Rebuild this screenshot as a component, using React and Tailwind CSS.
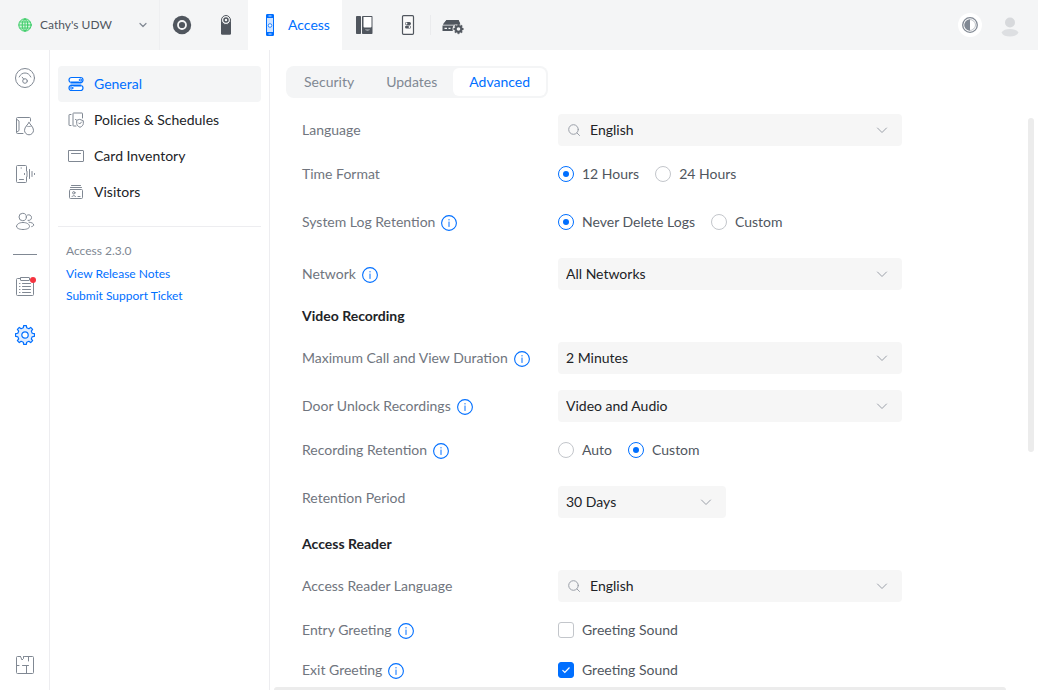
import { useState } from "react"
import clsx from "clsx"

/* ---------- icons ---------- */

function Icon({ size = 20, children, className }) {
  return (
    <svg
      width={size} height={size} viewBox={`0 0 ${size} ${size}`}
      fill="none" stroke="currentColor" strokeLinecap="round" strokeLinejoin="round"
      className={clsx("shrink-0", className)} aria-hidden="true"
    >
      {children}
    </svg>
  )
}

const GlobeIcon = () => (
  <Icon size={14} className="text-[#38cc65]">
    <circle cx="7" cy="7" r="6.200" fill="#d5f5df" />
    <ellipse cx="7" cy="7" rx="2.8" ry="6" />
    <path d="M7 1v12M1 7h12M2 4h10M2 10h10" strokeWidth="0.9" />
  </Icon>
)

const Chevron = ({ className }) => (
  <Icon size={12} className={className}>
    <path d="M1.5 4 6 8.5 10.5 4" />
  </Icon>
)

const SmallChevron = () => (
  <Icon size={8} className="text-[#808893]">
    <path d="M1 2.500 4 5.500 7 2.500" strokeWidth="1.200" />
  </Icon>
)

const NetworkIcon = () => (
  <Icon className="text-[#50565e]">
    <circle cx="10" cy="10" r="9.2" fill="currentColor" stroke="none" />
    <circle cx="10" cy="10" r="4" stroke="#f4f5f6" strokeWidth="1.8" />
  </Icon>
)

const ProtectIcon = () => (
  <Icon className="text-[#50565e]">
    <path d="M5 6h10v12.500a1.300 1.300 0 0 1-1.300 1.300H6.300A1.300 1.300 0 0 1 5 18.500z" fill="currentColor" stroke="none" />
    <circle cx="10" cy="5" r="4.500" fill="#f4f5f6" />
    <circle cx="10" cy="5" r="2" strokeWidth="1.500" />
  </Icon>
)

const AccessIcon = () => (
  <svg width="8" height="22" viewBox="0 0 8 22" fill="none" aria-hidden="true">
    <rect x="0.500" y="0.500" width="7" height="21" rx="0.500" fill="#cfe3ff" stroke="#006fff" />
    <rect x="0.500" y="0.500" width="7" height="3.500" fill="#006fff" />
    <rect x="0.500" y="18" width="7" height="3.500" fill="#006fff" />
    <path d="M2.500 2h3M2.500 20h3" stroke="#fff" strokeWidth="0.800" />
    <circle cx="4" cy="11.500" r="1.800" fill="#fff" stroke="#006fff" strokeWidth="0.800" />
  </svg>
)

const TalkIcon = () => (
  <Icon className="text-[#50565e]">
    <rect x="2" y="1" width="5" height="18" rx="0.800" fill="currentColor" stroke="none" />
    <rect x="8" y="1" width="10.500" height="18" rx="0.800" fill="currentColor" stroke="none" />
    <path d="M9.500 2h8v9.500a1 1 0 0 1-1 1h-6a1 1 0 0 1-1-1z" fill="#fff" stroke="none" />
    <path d="M11 14.500h5c-.5 1.500-4.500 1.500-5 0z" fill="#b9bdc3" stroke="none" />
  </Icon>
)

const ConnectIcon = () => (
  <Icon className="text-[#50565e]">
    <rect x="4.500" y="0.700" width="11" height="18.600" rx="1" fill="#fafafa" strokeWidth="1.200" />
    <rect x="7" y="7" width="6" height="3" rx="1.500" fill="currentColor" stroke="none" />
    <rect x="7" y="10.500" width="6" height="3" rx="1.500" fill="currentColor" stroke="none" />
    <circle cx="8.500" cy="8.500" r="0.900" fill="#fff" stroke="none" />
    <circle cx="11.500" cy="12" r="0.900" fill="#fff" stroke="none" />
  </Icon>
)

// closed outline of a cog, teeth spread evenly round the centre
function cogPath(cx, cy, outer, inner, teeth) {
  const step = (Math.PI * 2) / teeth
  const at = (r, a) => `${(cx + r * Math.sin(a)).toFixed(2)} ${(cy - r * Math.cos(a)).toFixed(2)}`
  let d = ""
  for (let i = 0; i < teeth; i++) {
    const a = i * step
    d += `${i ? "L" : "M"}${at(outer, a - step * 0.18)}L${at(outer, a + step * 0.18)}L${at(inner, a + step * 0.3)}L${at(inner, a + step * 0.7)}`
  }
  return d + "Z"
}

const ConsoleIcon = () => (
  <svg width="22" height="22" viewBox="0 -6 22 22" className="text-[#50565e]" aria-hidden="true">
    <path d="M4.500 0h12L18.500 4.500H1z" fill="currentColor" />
    <path d="M0.500 5.500h16v5.500h-16z" fill="currentColor" />
    <path d="M2.500 8.300h2.500M6.500 8.300h2" stroke="#f4f5f6" strokeWidth="1.200" />
    <circle cx="16.500" cy="9" r="6" fill="#f4f5f6" />
    <path d="M4.500 0h12L18.500 4.500H1z" fill="currentColor" />
    <path d={cogPath(16.5, 9, 4.9, 3.8, 8)} fill="currentColor" stroke="currentColor" strokeWidth="0.400" />
    <circle cx="16.500" cy="9" r="1.800" fill="#f4f5f6" />
  </svg>
)

const ContrastIcon = () => (
  <Icon size={16} className="text-[#808893]">
    <circle cx="8" cy="8" r="7.300" strokeWidth="1.300" />
    <path d="M8 2.200a5.800 5.800 0 0 0 0 11.600z" fill="currentColor" stroke="none" />
    <path d="M8 2.500a5.500 5.500 0 0 1 0 11" strokeWidth="0.500" />
  </Icon>
)

const AvatarIcon = () => (
  <Icon>
    <circle cx="10" cy="5.500" r="5" fill="#d7d9dc" stroke="none" />
    <path d="M1.500 15.500C3 13 6 12 10 12s7 1 8.500 3.500C17 18.500 14 19.500 10 19.500s-7-1-8.500-4z" fill="#dddfe2" stroke="none" />
  </Icon>
)

const DashboardIcon = () => (
  <Icon>
    <circle cx="10" cy="10" r="9.500" />
    <path d="M4.200 9c1.200-2.600 3.300-4 5.800-4s4.600 1.400 5.800 4" />
    <circle cx="10" cy="13" r="2.300" />
    <path d="m7.200 9.200 1.500 1.900" />
  </Icon>
)

const DoorsIcon = () => (
  <Icon>
    <path d="M15.500 5V2.500a1 1 0 0 0-1-1h-12a1 1 0 0 0-1 1v14a1 1 0 0 0 1 1H8" />
    <path d="M2 3.500 4 5v9.500L2 16" />
    <path d="M14 6.500c1 2 4.500 4.500 4.500 7.800a4.500 4.500 0 0 1-9 0c0-3.300 3.500-5.800 4.500-7.800z" />
    <path d="M11.500 10c1 .8 3.500.8 5 0" strokeWidth="0.800" />
  </Icon>
)

const DevicesIcon = () => (
  <Icon>
    <path d="M11.500 7V2.500a1 1 0 0 0-1-1h-8a1 1 0 0 0-1 1v15a1 1 0 0 0 1 1h8a1 1 0 0 0 1-1V13" />
    <path d="M6 4h.5M4.500 15.500h4" />
    <path d="M9.500 9.500v1M12 7.500v5M14.500 5.500v9M17 7.500v5M19.500 9.500v1" />
  </Icon>
)

const UsersIcon = () => (
  <Icon>
    <circle cx="7.700" cy="5" r="3.700" />
    <path d="M1.500 14.500c0-2.500 3-4 6.500-4s6.500 1.500 6.500 4c0 1.800-3 3-6.500 3s-6.500-1.200-6.500-3z" />
    <path d="M12.500 3c2-.8 4 .4 4 2.600 0 2-1.700 3.200-3.500 2.800M14 10.200c2.700.2 4.700 1.300 4.700 2.800 0 .8-.8 1.300-2 1.600" />
  </Icon>
)

const LogsIcon = () => (
  <Icon>
    <path d="M5.500 1.500h-3a1 1 0 0 0-1 1v15a1 1 0 0 0 1 1h15a1 1 0 0 0 1-1V5" />
    <rect x="5.500" y="0.500" width="9" height="3" rx="0.500" />
    <path d="M4.500 6.500h.5M4.500 9.500h.5M4.500 12.500h.5M4.500 15.500h.5M7.500 6.500h8M7.500 9.500h8M7.500 12.500h8M7.500 15.500h8" />
  </Icon>
)

const CogIcon = () => (
  <Icon>
    <path d={cogPath(10, 10, 9.5, 7.4, 8)} fill="#e0edff" strokeWidth="1.200" />
    <circle cx="10" cy="10" r="3.200" fill="#fff" strokeWidth="1.200" />
  </Icon>
)

const FloorplanIcon = () => (
  <Icon>
    <path d="M5.500 1.500h-3a1 1 0 0 0-1 1v15a1 1 0 0 0 1 1h15a1 1 0 0 0 1-1v-15a1 1 0 0 0-1-1h-8M5.500 1.500l1.500 3.500 1.500-1.500v-2M13.500 1.500V6M1.500 10.500H4M7.500 10.500h6M11.500 10.500v8" />
  </Icon>
)

const GeneralIcon = () => (
  <Icon size={16}>
    <rect x="1" y="1.500" width="14" height="5" rx="2.500" fill="#fff" strokeWidth="1.200" />
    <rect x="1" y="9.500" width="14" height="5" rx="2.500" fill="#fff" strokeWidth="1.200" />
    <path d="M2.500 5h8l3 2-.5 4H6L2.500 9z" fill="#7fb6ff" stroke="none" />
    <path d="M3.500 6.500h9a2.500 2.500 0 0 0 2-1M12.500 9.500h-9a2.500 2.500 0 0 0-2 1" strokeWidth="1.200" />
    <circle cx="12.300" cy="4" r="1.100" />
    <circle cx="3.800" cy="12" r="1.100" />
  </Icon>
)

const PoliciesIcon = () => (
  <Icon size={16}>
    <path d="M3 2.500H1.500a.5.500 0 0 0-.5.500v10a.5.500 0 0 0 .5.500H3M14.500 6V1.500a.5.500 0 0 0-.5-.5H5.500a.5.500 0 0 0-.5.500v12a.5.500 0 0 0 .5.500H8" />
    <path d="m12 7.500 3.300 1.200v2.800c0 1.800-1.500 3-3.300 3.800-1.800-.8-3.300-2-3.300-3.800V8.700zM10.700 11l1 1 1.800-2M7.500 7.500H8" />
  </Icon>
)

const CardIcon = () => (
  <Icon size={16}>
    <rect x="0.500" y="2.500" width="15" height="11" rx="0.500" />
    <path d="M3.500 5.500h9" />
  </Icon>
)

const VisitorsIcon = () => (
  <Icon size={16}>
    <path d="M3.500 1.500h9M2.500 3.500h11" />
    <rect x="1.500" y="5.500" width="13" height="9" rx="1" />
    <circle cx="5.800" cy="8.800" r="1.200" />
    <path d="M4 12.500c.5-1.200 3-1.200 3.600 0M10 12.500h2" />
  </Icon>
)

const SearchIcon = ({ className }) => (
  <Icon size={12} className={className}>
    <circle cx="5.500" cy="5.500" r="4.800" />
    <path d="m9 9 2.500 2.500" />
  </Icon>
)

const InfoIcon = () => (
  <Icon size={16} className="text-[#006fff]">
    <circle cx="8" cy="8" r="7.400" strokeWidth="1.100" />
    <path d="M8 7v4.500M8 4.500V5" />
  </Icon>
)

/* ---------- controls ---------- */

function Select({ id, value, search, className }) {
  return (
    <div className={clsx("relative h-8 text-[#212327]", className)}>
      {search && <SearchIcon className="pointer-events-none absolute left-2.5 top-2.5 text-[#9a9fa8]" />}
      <select id={id} defaultValue={value}
        className={clsx("h-8 w-full appearance-none rounded bg-[#f6f6f6] pr-8 text-sm outline-none", search ? "pl-8" : "pl-2")}>
        <option>{value}</option>
      </select>
      <Chevron className="pointer-events-none absolute right-[14px] top-2.5 text-[#9a9fa8]" />
    </div>
  )
}

function RadioGroup({ name, options, initial }) {
  const [value, setValue] = useState(initial)
  return (
    <div className="mb-2 flex h-6 items-center gap-4">
      {options.map(o => (
        <label key={o} className="flex items-center gap-2 text-[#50565e]">
          <input type="radio" name={name} checked={value === o} onChange={() => setValue(o)}
            className="grid size-4 appearance-none place-content-center rounded-full border border-[#c3c6cb] bg-white before:size-[6px] before:rounded-full checked:border-[#006fff] checked:before:bg-[#006fff]" />
          {o}
        </label>
      ))}
    </div>
  )
}

function Checkbox({ label, initial }) {
  const [checked, setChecked] = useState(initial)
  return (
    <label className="flex h-6 items-center gap-2 text-[#50565e]">
      <span className="relative size-4">
        <input type="checkbox" checked={checked} onChange={e => setChecked(e.target.checked)}
          className="block size-4 appearance-none rounded-[3px] border border-[#c3c6cb] bg-white checked:border-[#006fff] checked:bg-[#006fff]" />
        {checked && (
          <svg viewBox="0 0 16 16" fill="none" stroke="#fff" className="pointer-events-none absolute inset-0" aria-hidden="true">
            <path d="m4.500 8.200 2.300 2.300 4.700-5" strokeWidth="1.200" />
          </svg>
        )}
      </span>
      {label}
    </label>
  )
}

function Row({ label, info, htmlFor, top, children }) {
  const Label = htmlFor ? "label" : "span"
  return (
    <div className={clsx("grid grid-cols-[256px_1fr]", top ? "items-start" : "items-center")}>
      <div className="flex h-6 items-center gap-1.5 text-[#70757e]">
        <Label htmlFor={htmlFor}>{label}</Label>
        {info && <span className="pt-0.5"><InfoIcon /></span>}
      </div>
      {children}
    </div>
  )
}

const SectionTitle = ({ children }) => (
  <h2 className="h-5 font-bold leading-5 text-[#212327]">{children}</h2>
)

/* ---------- page ---------- */

const railItems = [
  { label: "Dashboard", icon: DashboardIcon },
  { label: "Doors", icon: DoorsIcon },
  { label: "Devices", icon: DevicesIcon },
  { label: "Users", icon: UsersIcon },
]

const navItems = [
  { label: "General", icon: GeneralIcon },
  { label: "Policies & Schedules", icon: PoliciesIcon },
  { label: "Card Inventory", icon: CardIcon },
  { label: "Visitors", icon: VisitorsIcon },
]

function AppButton({ label, children }) {
  return (
    <button aria-label={label} className="flex h-full w-11 items-center justify-center">
      {children}
    </button>
  )
}

function Header() {
  return (
    <header className="flex h-[50px] shrink-0 items-center bg-[#f4f5f6]">
      <button className="flex h-full w-40 items-center gap-2 border-r border-[#eeeff1] pl-[18px] pr-3 text-xs text-[#50565e]">
        <GlobeIcon />
        <span className="flex-1 text-left">Cathy's UDW</span>
        <SmallChevron />
      </button>
      <AppButton label="Network"><NetworkIcon /></AppButton>
      <AppButton label="Protect"><ProtectIcon /></AppButton>
      <button className="flex h-full items-center gap-3.5 bg-white pl-[18px] pr-3 text-sm text-[#006fff]">
        <AccessIcon />
        Access
      </button>
      <AppButton label="Talk"><TalkIcon /></AppButton>
      <AppButton label="Connect"><ConnectIcon /></AppButton>
      <div className="h-5 w-px bg-[#eaebed]" />
      <AppButton label="Console settings"><ConsoleIcon /></AppButton>
      <div className="ml-auto flex items-center gap-[18px] pr-[18px]">
        <button aria-label="Theme" className="flex size-6 items-center justify-center rounded-full bg-white"><ContrastIcon /></button>
        <button aria-label="Account" className="pt-1"><AvatarIcon /></button>
      </div>
    </header>
  )
}

function Rail() {
  return (
    <aside className="flex w-[50px] shrink-0 flex-col items-center border-r border-[#ededf0] pb-px pt-1 text-[#808893]">
      {railItems.map(({ label, icon: Glyph }) => (
        <button key={label} aria-label={label} className="flex size-12 items-center justify-center"><Glyph /></button>
      ))}
      <div className="my-2 h-px w-6 bg-[#808893]" />
      <button aria-label="Logs" className="flex size-12 items-center justify-center">
        <span className="relative">
          <LogsIcon />
          <span className="absolute -right-px top-0 size-1.5 rounded-full bg-[#f5333f]" />
        </span>
      </button>
      <button aria-label="Settings" className="flex size-12 items-center justify-center text-[#006fff]"><CogIcon /></button>
      <button aria-label="Floorplan" className="mt-auto flex size-12 items-center justify-center"><FloorplanIcon /></button>
    </aside>
  )
}

function SettingsNav() {
  return (
    <nav className="w-[220px] shrink-0 border-r border-[#ededf0] px-2 pt-4">
      {navItems.map(({ label, icon: Glyph }, i) => (
        <a key={label} href="#"
          className={clsx("flex h-9 items-center gap-2.5 rounded px-2.5", i === 0 ? "bg-[#f4f5f6] text-[#006fff]" : "text-[#212327]")}>
          <span className={i === 0 ? "" : "text-[#808893]"}><Glyph /></span>
          {label}
        </a>
      ))}
      <div className="mt-4 border-t border-[#ededf0] px-2 pt-3.5 text-xs text-[#808893]">
        <p className="h-[22px] leading-5">Access 2.3.0</p>
        <a href="#" className="block h-[22px] leading-[22px] text-[#006fff]">View Release Notes</a>
        <a href="#" className="block h-[22px] leading-[22px] text-[#006fff]">Submit Support Ticket</a>
      </div>
    </nav>
  )
}

export default function App() {
  const [tab, setTab] = useState("Advanced")

  return (
    <div className="flex h-screen flex-col overflow-hidden bg-white font-['Lato',sans-serif] text-sm">
      <Header />
      <div className="flex min-h-0 flex-1">
        <Rail />
        <SettingsNav />
        <main className="relative min-w-0 flex-1 overflow-hidden px-4 pt-4">
          <div className="inline-flex h-8 rounded-lg bg-[#f4f5f6] p-0.5">
            {["Security", "Updates", "Advanced"].map(t => (
              <button key={t} onClick={() => setTab(t)}
                className={clsx("rounded-md px-4", t === tab ? "bg-white text-[#006fff]" : "text-[#808893]")}>
                {t}
              </button>
            ))}
          </div>

          <div className="mt-4 flex max-w-[632px] flex-col gap-4 px-4">
            <Row label="Language" htmlFor="language"><Select id="language" value="English" search /></Row>
            <Row label="Time Format" top><RadioGroup name="time" options={["12 Hours", "24 Hours"]} initial="12 Hours" /></Row>
            <Row label="System Log Retention" info top>
              <RadioGroup name="logs" options={["Never Delete Logs", "Custom"]} initial="Never Delete Logs" />
            </Row>
            <Row label="Network" info htmlFor="network"><Select id="network" value="All Networks" /></Row>

            <SectionTitle>Video Recording</SectionTitle>
            <Row label="Maximum Call and View Duration" info htmlFor="duration"><Select id="duration" value="2 Minutes" /></Row>
            <Row label="Door Unlock Recordings" info htmlFor="unlock"><Select id="unlock" value="Video and Audio" /></Row>
            <Row label="Recording Retention" info top><RadioGroup name="retention" options={["Auto", "Custom"]} initial="Custom" /></Row>
            <Row label="Retention Period" htmlFor="period" top><Select id="period" value="30 Days" className="w-[168px]" /></Row>

            <SectionTitle>Access Reader</SectionTitle>
            <Row label="Access Reader Language" htmlFor="reader"><Select id="reader" value="English" search /></Row>
            <Row label="Entry Greeting" info><Checkbox label="Greeting Sound" initial={false} /></Row>
            <Row label="Exit Greeting" info><Checkbox label="Greeting Sound" initial={true} /></Row>
          </div>

          {/* Scrollbar thumbs */}
          <div className="absolute right-1 top-[68px] h-[334px] w-1.5 rounded-full bg-[#ececec]" />
          <div className="absolute bottom-0 left-1 right-8 h-[3px] rounded-t bg-[#ececec]" />
        </main>
      </div>
    </div>
  )
}
